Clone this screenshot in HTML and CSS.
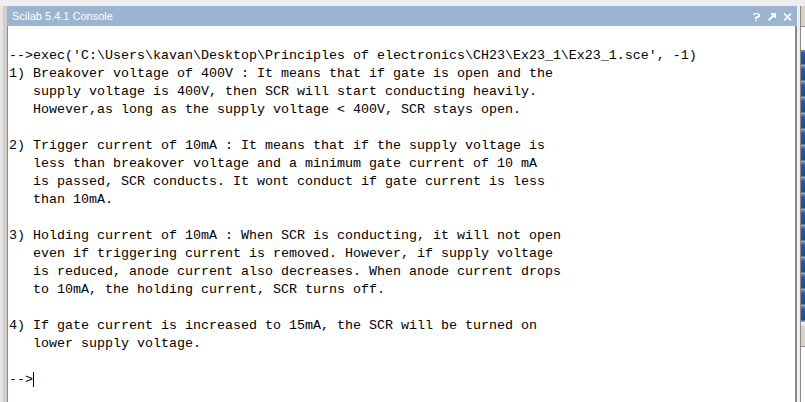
FILE: index.html
```html
<!DOCTYPE html>
<html>
<head>
<meta charset="utf-8">
<title>Scilab 5.4.1 Console</title>
<link rel="stylesheet" href="styles.css">
</head>
<body>
<div class="frame">
  <div class="left-strip"><div class="ls-a"></div><div class="ls-b"></div></div>
  <div class="console">
    <div class="titlebar">
      <span class="title">Scilab 5.4.1 Console</span>
      <div class="tools">
        <svg class="tool" width="8" height="8" viewBox="0 0 8 8"><path d="M1 0h5v1h1v3h-1v1h-2v1h-2v-2h1v-1h2v-2h-3v1h-2v-1h1z" fill="#fff"/><rect x="2" y="7" width="2" height="1" fill="#fff"/></svg>
        <svg class="tool" width="8" height="8" viewBox="0 0 8 8"><path d="M3 0h5v5h-2v-1h-1v1h-1v1h-1v1h-1v1h-1v-1h-1v-1h1v-1h1v-1h1v-1h1v-1h-1z" fill="#fff"/></svg>
        <svg class="tool" width="9" height="8" viewBox="0 0 9 8"><path d="M1 0.5l7 7M8 0.5l-7 7" stroke="#fff" stroke-width="1.7"/></svg>
      </div>
    </div>
    <div class="content">
<pre class="out">
--&gt;exec('C:\Users\kavan\Desktop\Principles of electronics\CH23\Ex23_1\Ex23_1.sce', -1)
1) Breakover voltage of 400V : It means that if gate is open and the
   supply voltage is 400V, then SCR will start conducting heavily.
   However,as long as the supply voltage &lt; 400V, SCR stays open.

2) Trigger current of 10mA : It means that if the supply voltage is
   less than breakover voltage and a minimum gate current of 10 mA
   is passed, SCR conducts. It wont conduct if gate current is less
   than 10mA.

3) Holding current of 10mA : When SCR is conducting, it will not open
   even if triggering current is removed. However, if supply voltage
   is reduced, anode current also decreases. When anode current drops
   to 10mA, the holding current, SCR turns off.

4) If gate current is increased to 15mA, the SCR will be turned on
   lower supply voltage.

--&gt;<span class="caret"></span></pre>
    </div>
  </div>
  <div class="gap"></div>
  <div class="side">
    <div class="side-head"></div>
    <div class="side-top"></div>
    <div class="side-list"></div>
    <div class="side-sep"></div>
    <div class="side-head2"></div>
    <div class="side-body"></div>
  </div>
</div>
</body>
</html>
```
FILE: styles.css
```css
html, body {
  margin: 0;
  padding: 0;
  background: #eeeeee;
  overflow: hidden;
}
.frame {
  display: flex;
  height: 396px;
  margin-top: 6px;
}
.left-strip {
  display: flex;
  width: 7px;
  flex: none;
}
.ls-a {
  width: 3px;
  background: #e6e6e6;
}
.ls-b {
  width: 4px;
  background: #d4d0c8;
}
.console {
  width: 790px;
  flex: none;
  display: flex;
  flex-direction: column;
}
.titlebar {
  height: 20px;
  background: #9bb4d1;
  display: flex;
  align-items: center;
  justify-content: space-between;
  padding: 0 5px 0 5px;
  flex: none;
}
.title {
  color: #ffffff;
  font-family: "Liberation Sans", "DejaVu Sans", sans-serif;
  font-size: 11px;
  letter-spacing: 0;
}
.tools {
  display: flex;
  align-items: center;
  gap: 7px;
  padding-top: 1px;
}
.tool {
  display: block;
}
.content {
  flex: 1;
  background: #ffffff;
  border-left: 1px solid #8a8a8a;
  border-right: 2px solid #8a8a8a;
}
.out {
  margin: 0;
  padding: 21px 0 0 1px;
  font-family: "Liberation Mono", "Courier New", monospace;
  font-size: 13.333px;
  line-height: 18px;
  color: #000;
}
.caret {
  display: inline-block;
  width: 1px;
  height: 15px;
  background: #000;
  vertical-align: -4px;
}
.gap {
  width: 3px;
  flex: none;
  background: #eeeeee;
}
.side {
  flex: 1;
  display: flex;
  flex-direction: column;
  border-left: 1px solid #8a8a8a;
}
.side-head {
  height: 20px;
  background: #d4d0c8;
  border-bottom: 1px solid #8a8a8a;
}
.side-top {
  height: 23px;
  background: #ffffff;
}
.side-list {
  height: 272px;
  background: repeating-linear-gradient(to bottom, #6f8fbf 0, #2d5a9c 3px, #1f4c8f 14px, #9aa6b8 15px, #9aa6b8 16px);
}
.side-sep {
  height: 4px;
  background: #eeeeee;
}
.side-head2 {
  height: 20px;
  background: #d4d0c8;
  border-bottom: 1px solid #8a8a8a;
}
.side-body {
  flex: 1;
  background: #ffffff;
}
```
